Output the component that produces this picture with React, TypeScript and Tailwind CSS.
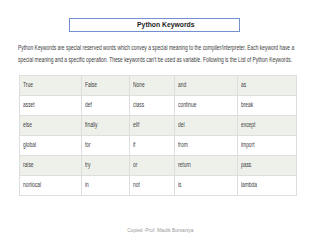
import React from "react"

const rows = [
  ["True", "False", "None", "and", "as"],
  ["asset", "def", "class", "continue", "break"],
  ["else", "finally", "elif", "del", "except"],
  ["global", "for", "if", "from", "import"],
  ["raise", "try", "or", "return", "pass"],
  ["nonlocal", "in", "not", "is", "lambda"],
]

const widths = ["w-[62px]", "w-[48px]", "w-[45px]", "w-[63px]", "w-[59px]"]

export default function App() {
  return (
    <div className="h-[240px] w-[320px] overflow-hidden bg-white font-['Liberation_Sans',sans-serif] text-[#404040]">
      <div className="ml-[69px] mt-[18px] flex h-[14px] w-[171px] items-center justify-center border border-[#7391cf] pl-[22px]">
        <span className="origin-center scale-x-[0.85] whitespace-nowrap text-[8px] font-bold leading-none text-[#1a1a1a]">
          Python Keywords
        </span>
      </div>

      <div className="ml-[18px] mt-[10px] text-[7px] leading-[12px] text-[#3a3a3a]">
        <div className="origin-left scale-x-[0.7] whitespace-nowrap">
          Python Keywords are special reserved words which convey a special meaning to the compiler/interpreter. Each keyword have a
        </div>
        <div className="origin-left scale-x-[0.7] whitespace-nowrap">
          special meaning and a specific operation. These keywords can't be used as variable. Following is the List of Python Keywords.
        </div>
      </div>

      <table className="ml-[19px] mt-[9px] border-collapse border border-[#dedede] text-[6.5px] leading-none">
        <tbody>
          {rows.map((r, i) => (
            <tr key={i} className={i % 2 === 0 ? "bg-[#eef0ea]" : "bg-white"}>
              {r.map((c, j) => (
                <td
                  key={j}
                  className={`${widths[j]} h-[20px] border border-[#dedede] p-0 pl-[3px] align-middle`}
                >
                  <span className="inline-block origin-left scale-x-[0.75] whitespace-nowrap">
                    {c}
                  </span>
                </td>
              ))}
            </tr>
          ))}
        </tbody>
      </table>

      <div className="mt-[31px] flex justify-center leading-none">
        <span className="origin-center scale-x-[0.8] whitespace-nowrap text-[6px] leading-none text-[#9a9a9a]">
          Copied -Prof. Maulik Borsaniya
        </span>
      </div>
    </div>
  )
}
